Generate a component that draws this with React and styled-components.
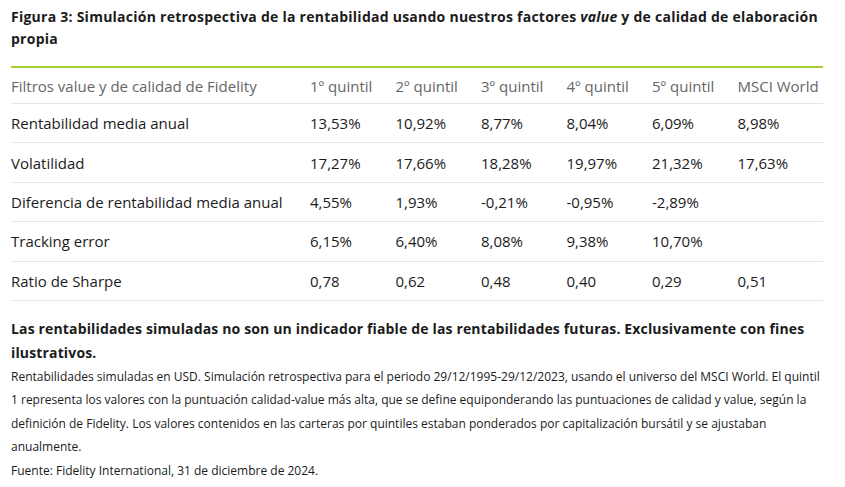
import React from "react";
import styled, { createGlobalStyle } from "styled-components";

const GlobalStyle = createGlobalStyle`
  body {
    margin: 0;
    background: #ffffff;
    font-family: "Open Sans", sans-serif;
    color: #1b1b1b;
  }
`;

const headers = ["1º quintil", "2º quintil", "3º quintil", "4º quintil", "5º quintil", "MSCI World"];

const rows = [
  ["Rentabilidad media anual", "13,53%", "10,92%", "8,77%", "8,04%", "6,09%", "8,98%"],
  ["Volatilidad", "17,27%", "17,66%", "18,28%", "19,97%", "21,32%", "17,63%"],
  ["Diferencia de rentabilidad media anual", "4,55%", "1,93%", "-0,21%", "-0,95%", "-2,89%", ""],
  ["Tracking error", "6,15%", "6,40%", "8,08%", "9,38%", "10,70%", ""],
  ["Ratio de Sharpe", "0,78", "0,62", "0,48", "0,40", "0,29", "0,51"],
];

const App = () => {
  return (
    <Page>
      <GlobalStyle />
      <Title>
        Figura 3: Simulación retrospectiva de la rentabilidad usando nuestros factores <em>value</em> y de
        calidad de elaboración propia
      </Title>
      <Table>
        <thead>
          <tr>
            <HeadCell>Filtros value y de calidad de Fidelity</HeadCell>
            {headers.map((h) => (
              <HeadCell key={h}>{h}</HeadCell>
            ))}
          </tr>
        </thead>
        <tbody>
          {rows.map((r) => (
            <tr key={r[0]}>
              {r.map((c, i) => (
                <Cell key={i}>{c}</Cell>
              ))}
            </tr>
          ))}
        </tbody>
      </Table>
      <Disclaimer>
        Las rentabilidades simuladas no son un indicador fiable de las rentabilidades futuras. Exclusivamente
        con fines ilustrativos.
      </Disclaimer>
      <Note>
        Rentabilidades simuladas en USD. Simulación retrospectiva para el periodo 29/12/1995-29/12/2023, usando
        el universo del MSCI World. El quintil 1 representa los valores con la puntuación calidad-value más alta,
        que se define equiponderando las puntuaciones de calidad y value, según la definición de Fidelity. Los
        valores contenidos en las carteras por quintiles estaban ponderados por capitalización bursátil y se
        ajustaban anualmente.
      </Note>
      <Note>Fuente: Fidelity International, 31 de diciembre de 2024.</Note>
    </Page>
  );
};

const Page = styled.div`
  width: 812px;
  padding: 6px 0 0 11px;
`;

const Title = styled.h3`
  margin: 0 0 16px;
  font-size: 14px;
  font-weight: 700;
  line-height: 22px;
  letter-spacing: 0.25px;
  color: #1b1b1b;

  em {
    font-style: italic;
  }
`;

const Table = styled.table`
  width: 812px;
  border-collapse: collapse;
  border-top: 2px solid #a2d12f;
  table-layout: fixed;

  th:first-child,
  td:first-child {
    width: 299px;
  }
`;

const HeadCell = styled.th`
  height: 35px;
  padding: 0;
  text-align: left;
  font-weight: 400;
  font-size: 15px;
  color: #666666;
  border-bottom: 1px solid #e6e6e6;
`;

const Cell = styled.td`
  height: 38.4px;
  padding: 0;
  font-size: 15px;
  color: #1b1b1b;
  border-bottom: 1px solid #e6e6e6;
`;

const Disclaimer = styled.p`
  margin: 16px 0 0;
  font-size: 14px;
  font-weight: 700;
  line-height: 24px;
  letter-spacing: 0.15px;
`;

const Note = styled.p`
  margin: 0;
  font-size: 12px;
  line-height: 23.5px;
  color: #1b1b1b;
`;

export default App;
